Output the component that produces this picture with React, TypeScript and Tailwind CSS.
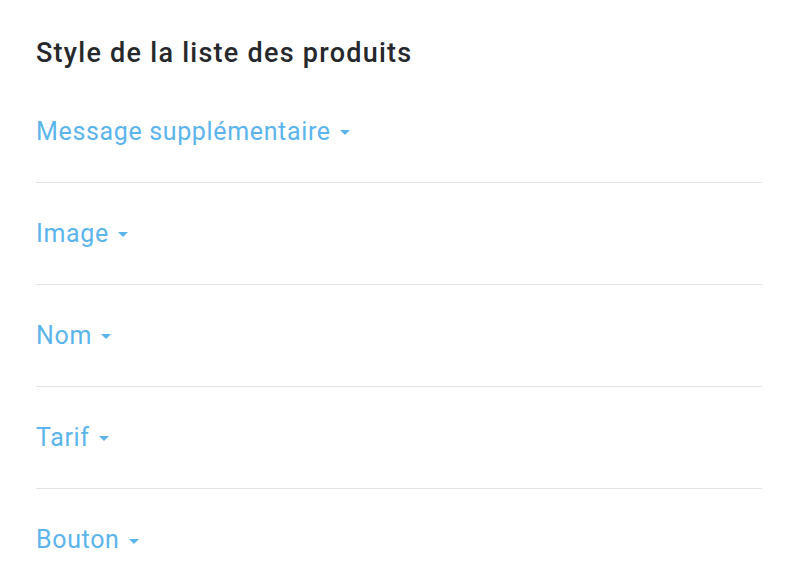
import React from "react";

const items = ["Message supplémentaire", "Image", "Nom", "Tarif", "Bouton"];

function Caret() {
  return (
    <svg width="10" height="5" viewBox="0 0 10 5" className="ml-[9px] mt-[2px]">
      <path d="M0 0 L10 0 L5 5 Z" fill="#5bb4ec" />
    </svg>
  );
}

export default function App() {
  return (
    <div className="w-[808px] h-[574px] overflow-hidden bg-white px-[36px] pt-[35px]" style={{ fontFamily: "Roboto, 'Noto Sans', sans-serif" }}>
      <div className="w-[726px]">
        <h2 className="text-[27px] leading-[36px] font-medium tracking-[1.25px] text-[#26282b]">Style de la liste des produits</h2>
        <div className="pt-[10px]">
          {items.map((it, i) => (
            <div key={it} className={`h-[102px] flex items-center ${i < items.length - 1 ? "border-b border-[#e3e3e3]" : ""}`}>
              <div className="flex items-center text-[25px] leading-[30px] tracking-[0.65px] text-[#5bb4ec]">
                <span>{it}</span>
                <Caret />
              </div>
            </div>
          ))}
        </div>
      </div>
    </div>
  );
}
